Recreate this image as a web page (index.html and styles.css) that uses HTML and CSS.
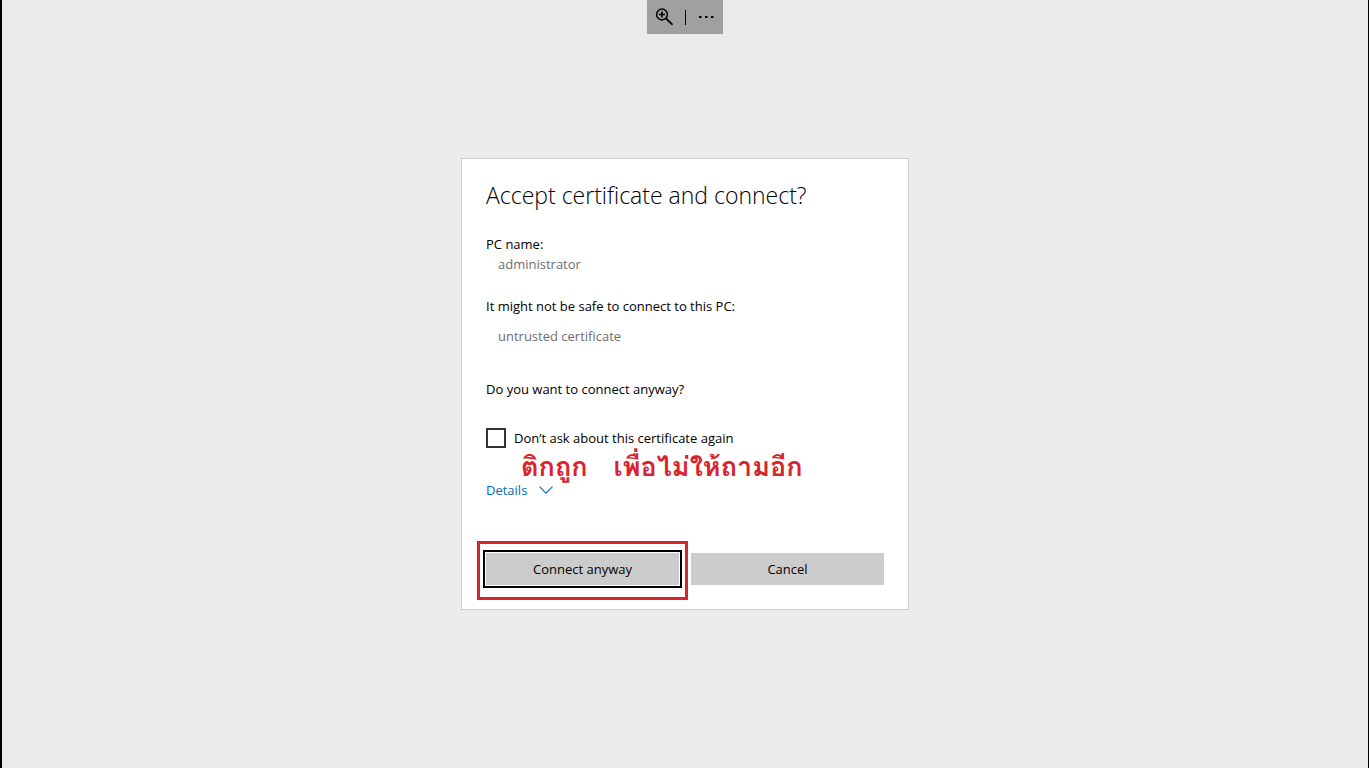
FILE: index.html
```html
<!DOCTYPE html>
<html lang="en">
<head>
<meta charset="utf-8">
<title>Accept certificate and connect?</title>
<link rel="stylesheet" href="styles.css">
</head>
<body>
<div class="session-bar">
  <button class="bar-button" type="button" aria-label="Zoom">
    <svg width="18" height="18" viewBox="0 0 18 18" fill="none" stroke="#000">
      <circle cx="7" cy="6.5" r="5.4" stroke-width="1.5"/>
      <path d="M11 10.5L17.5 16.7" stroke-width="1.8"/>
      <path d="M7 3.5v6M4 6.5h6" stroke-width="1.6"/>
    </svg>
  </button>
  <span class="bar-divider"></span>
  <button class="bar-button" type="button" aria-label="More">
    <svg width="16" height="16" viewBox="0 0 16 16" fill="#000">
      <path d="M0 7h2.5v2H0zM6 7h2.5v2H6zM12 7h2.5v2H12z"/>
    </svg>
  </button>
</div>
<main class="stage">
  <section class="dialog" role="dialog" aria-labelledby="dialog-title">
    <h1 class="dialog-title" id="dialog-title">Accept certificate and connect?</h1>
    <p class="text">PC name:</p>
    <p class="text value">administrator</p>
    <p class="text warning">It might not be safe to connect to this PC:</p>
    <p class="text value reason">untrusted certificate</p>
    <p class="text question">Do you want to connect anyway?</p>
    <div class="remember">
      <input class="checkbox" type="checkbox" id="remember">
      <label class="text" for="remember">Don’t ask about this certificate again</label>
      <div class="note" lang="th"><span>ติกถูก</span><span>เพื่อไม่ให้ถามอีก</span></div>
    </div>
    <button class="text details" type="button">Details
      <svg width="14" height="8" viewBox="0 0 14 8" fill="none" stroke="currentColor" stroke-width="1.1"><path d="M.5.7L7 7.2L13.5.7"/></svg>
    </button>
    <div class="actions">
      <div class="action highlighted"><button class="text button focused" type="button">Connect anyway</button></div>
      <div class="action"><button class="text button" type="button">Cancel</button></div>
    </div>
  </section>
</main>
</body>
</html>
```

FILE: styles.css
```css
* {
  box-sizing: border-box;
}

body {
  margin: 0;
  min-height: 100vh;
  display: flex;
  background: #ebebeb;
  border-left: 2px solid #000;
  border-right: 1px solid #000;
  color: #000;
  font-family: "Segoe UI", "Open Sans", "Noto Sans", sans-serif;
}

.session-bar {
  position: absolute;
  top: 0;
  left: 50%;
  transform: translateX(-50%);
  display: flex;
  align-items: center;
  justify-content: space-between;
  width: 76px;
  height: 34px;
  padding: 0 8px;
  background: #a0a0a0;
}

.bar-button {
  display: flex;
  padding: 0;
  border: 0;
  background: none;
}

.bar-divider {
  width: 1px;
  height: 15px;
  background: #000;
}

.stage {
  flex: 1;
  display: flex;
  align-items: center;
  justify-content: center;
}

.dialog {
  width: 100%;
  max-width: 448px;
  padding: 20px 24px 24px;
  border: 1px solid #ccc;
  background: #fff;
}

.dialog-title {
  margin: 0 0 23px;
  font-size: 23px;
  line-height: 32px;
  font-weight: 300;
}

.text {
  margin: 0;
  font-family: inherit;
  font-size: 13px;
  line-height: 20px;
}

.value {
  padding-left: 12px;
  color: #6e6e6e;
}

.warning {
  margin-top: 22px;
}

.reason {
  margin-top: 10px;
}

.question {
  margin-top: 33px;
}

.remember {
  position: relative;
  display: flex;
  gap: 8px;
  margin-top: 29px;
}

.checkbox {
  appearance: none;
  width: 20px;
  height: 20px;
  margin: 0;
  border: 2px solid #333;
  background: #fff;
}

.checkbox:checked {
  background: #0067b8;
}

.note {
  position: absolute;
  top: 23px;
  left: 35px;
  display: flex;
  gap: 26px;
  color: #d9232e;
  font-family: "Leelawadee UI", Waree, Garuda, Loma, "Noto Sans Thai Looped", "Open Sans", sans-serif;
  font-size: 27px;
  line-height: 32px;
  font-weight: 700;
  white-space: nowrap;
}

.details {
  display: flex;
  align-items: center;
  gap: 12px;
  margin-top: 32px;
  padding: 0;
  border: 0;
  background: none;
  color: #0070b8;
}

.actions {
  display: flex;
  gap: 12px;
  margin-top: 53px;
}

.action {
  position: relative;
  flex: 1;
}

.highlighted::after {
  content: "";
  position: absolute;
  inset: -12px -9px -15px;
  border: 3px solid #d9232e;
  pointer-events: none;
}

.button {
  width: 100%;
  height: 32px;
  padding: 0;
  border: 0;
  background: #ccc;
}

.focused {
  outline: 2px solid #000;
  outline-offset: 1px;
}
```
